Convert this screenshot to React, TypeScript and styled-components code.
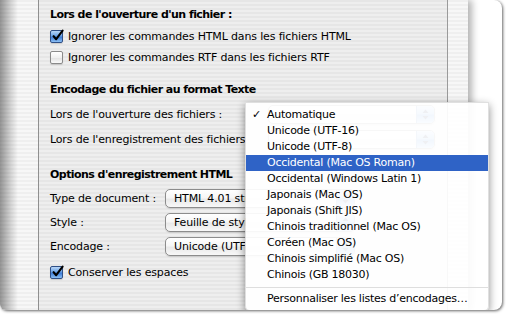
import React from 'react';
import styled, { createGlobalStyle } from 'styled-components';

const GlobalStyle = createGlobalStyle`
	html, body {
		margin: 0;
		padding: 0;
		background: #fff;
	}
	body {
		font-family: "DejaVu Sans", "Liberation Sans", sans-serif;
		color: #000;
	}
`;

const Stage = styled.div`
	width: 509px;
	height: 317px;
	background: #fff;
	overflow: hidden;
`;

const Picture = styled.div`
	position: relative;
	width: 502px;
	height: 310px;
	background: #fff;
	border-radius: 0 8px 8px 6px;
	box-shadow: 1px 1px 3px rgba(0, 0, 0, 0.6);
	overflow: hidden;
	display: flex;
`;

const Window = styled.div`
	position: relative;
	width: 468px;
	height: 100%;
	display: flex;
	background: repeating-linear-gradient(to bottom, #efefef 0, #efefef 2px, #f7f7f7 2px, #f7f7f7 4px);
	box-shadow: 4px 0 7px rgba(0, 0, 0, 0.3);

	&::before {
		content: '';
		position: absolute;
		left: 0;
		top: 0;
		bottom: 0;
		width: 18px;
		background: linear-gradient(to right, rgba(0, 0, 0, 0.4), rgba(0, 0, 0, 0.14) 60%, rgba(0, 0, 0, 0));
	}
`;

const SideFrame = styled.div<{ $width: number }>`
	width: ${(p) => p.$width}px;
	flex: none;
`;

const Panel = styled.div`
	flex: 1;
	border-left: 1px solid #8f8f8f;
	border-right: 1px solid #9a9a9a;
	background: repeating-linear-gradient(to bottom, #e6e6e6 0, #e6e6e6 2px, #eeeeee 2px, #eeeeee 4px);
	padding: 5px 0 0 11px;
	display: flex;
	flex-direction: column;
	font-size: 11px;
	letter-spacing: -0.15px;
`;

const Heading = styled.div<{ $gap?: number }>`
	height: 20px;
	line-height: 20px;
	font-weight: bold;
	letter-spacing: -0.55px;
	margin-top: ${(p) => p.$gap || 0}px;
	white-space: nowrap;
`;

const CheckRow = styled.label<{ $gap?: number; $height?: number }>`
	display: flex;
	align-items: center;
	gap: 5px;
	height: ${(p) => p.$height || 21}px;
	margin-top: ${(p) => p.$gap || 0}px;
	white-space: nowrap;
`;

const Box = styled.span<{ $checked: boolean }>`
	width: 11px;
	height: 11px;
	flex: none;
	position: relative;
	border-radius: 2px;
	border: 1px solid ${(p) => (p.$checked ? '#2f4f86' : '#8a8a8a')};
	background: ${(p) =>
		p.$checked
			? 'linear-gradient(to bottom, #b9d6f7 0%, #6aa2e6 45%, #3b7ad6 55%, #8cc0f4 100%)'
			: 'linear-gradient(to bottom, #ffffff 0%, #f0f0f0 50%, #e2e2e2 55%, #fafafa 100%)'};
	box-shadow: 0 1px 1px rgba(0, 0, 0, 0.15);

	svg {
		position: absolute;
		left: 0px;
		top: -2px;
	}
`;

const FieldGrid = styled.div<{ $label: number; $row: number; $gap?: number }>`
	display: grid;
	grid-template-columns: ${(p) => p.$label}px auto;
	grid-auto-rows: ${(p) => p.$row}px;
	align-items: center;
	margin-top: ${(p) => p.$gap || 0}px;
`;

const Label = styled.div`
	white-space: nowrap;
`;

const Popup = styled.div<{ $width: number }>`
	position: relative;
	width: ${(p) => p.$width}px;
	height: 17px;
	border: 1px solid #8c8c8c;
	border-radius: 5px;
	background: linear-gradient(to bottom, #ffffff 0%, #f6f6f6 45%, #e9e9e9 55%, #f8f8f8 100%);
	box-shadow: 0 1px 1px rgba(0, 0, 0, 0.12);
	display: flex;
	align-items: center;
	padding-left: 8px;
	box-sizing: content-box;
	white-space: nowrap;
	overflow: hidden;
`;

/* the open menu covers the rest of the value, so only the visible part is kept */
const PopupValue = styled.span`
	display: block;
	max-width: 72px;
	overflow: hidden;
`;

const PopupArrows = styled.span`
	position: absolute;
	right: 0;
	top: 0;
	bottom: 0;
	width: 17px;
	border-left: 1px solid #6a8fc4;
	background: linear-gradient(to bottom, #c9e0fa 0%, #7fb0ec 45%, #4d8ddf 55%, #a8d0f8 100%);
	display: flex;
	align-items: center;
	justify-content: center;
`;

const Menu = styled.div`
	position: absolute;
	left: 245px;
	top: 102px;
	width: 244px;
	padding: 4px 0 3px;
	background: rgba(255, 255, 255, 0.93);
	border: 1px solid rgba(0, 0, 0, 0.12);
	border-radius: 0 0 5px 5px;
	box-shadow: 0 3px 9px rgba(0, 0, 0, 0.45);
	font-size: 11px;
	letter-spacing: -0.25px;
	box-sizing: border-box;
`;

const MenuItem = styled.div<{ $active?: boolean }>`
	position: relative;
	height: 16px;
	line-height: 16px;
	padding-left: 21px;
	white-space: nowrap;
	background: ${(p) => (p.$active ? '#2f63c6' : 'transparent')};
	color: ${(p) => (p.$active ? '#fff' : '#000')};
`;

const Tick = styled.span`
	position: absolute;
	left: 6px;
	top: 0;
	font-size: 11px;
`;

const Separator = styled.div`
	height: 8px;
	display: flex;
	align-items: center;

	&::after {
		content: '';
		flex: 1;
		height: 1px;
		background: #dedede;
	}
`;

const CheckMark = () => (
	<svg width="13" height="13" viewBox="0 0 13 13">
		<path d="M2.6 7.2 L5.2 10.2 L11.6 1.6" fill="none" stroke="#000" strokeWidth="2.1" strokeLinecap="round" strokeLinejoin="round" />
	</svg>
);

const Arrows = () => (
	<svg width="7" height="11" viewBox="0 0 7 11">
		<path d="M3.5 0.5 L6.5 4 L0.5 4 Z M3.5 10.5 L6.5 7 L0.5 7 Z" fill="#1b2f55" />
	</svg>
);

type CheckProps = {
	checked: boolean;
	text: string;
	gap?: number;
	height?: number;
};

const Check = ({ checked, text, gap, height }: CheckProps) => (
	<CheckRow $gap={gap} $height={height}>
		<Box $checked={checked}>{checked && <CheckMark />}</Box>
		<span>{text}</span>
	</CheckRow>
);

const SelectBox = ({ value, width }: { value: string; width: number }) => (
	<Popup $width={width}>
		<PopupValue>{value}</PopupValue>
		<PopupArrows>
			<Arrows />
		</PopupArrows>
	</Popup>
);

const encodings = [
	'Automatique',
	'Unicode (UTF-16)',
	'Unicode (UTF-8)',
	'Occidental (Mac OS Roman)',
	'Occidental (Windows Latin 1)',
	'Japonais (Mac OS)',
	'Japonais (Shift JIS)',
	'Chinois traditionnel (Mac OS)',
	'Coréen (Mac OS)',
	'Chinois simplifié (Mac OS)',
	'Chinois (GB 18030)',
];

export default function App() {
	return (
		<Stage>
			<GlobalStyle />
			<Picture>
				<Window>
					<SideFrame $width={38} />
					<Panel>
						<Heading>Lors de l'ouverture d'un fichier :</Heading>
						<Check checked text="Ignorer les commandes HTML dans les fichiers HTML" gap={1} />
						<Check checked={false} text="Ignorer les commandes RTF dans les fichiers RTF" />

						<Heading $gap={12}>Encodage du fichier au format Texte</Heading>
						<FieldGrid $label={218} $row={25} $gap={2}>
							<Label>Lors de l'ouverture des fichiers :</Label>
							<SelectBox value="" width={157} />
							<Label>Lors de l'enregistrement des fichiers</Label>
							<SelectBox value="" width={157} />
						</FieldGrid>

						<Heading $gap={13}>Options d'enregistrement HTML</Heading>
						<FieldGrid $label={115} $row={24} $gap={1}>
							<Label>Type de document :</Label>
							<SelectBox value="HTML 4.01 strict" width={180} />
							<Label>Style :</Label>
							<SelectBox value="Feuille de style incorporée" width={180} />
							<Label>Encodage :</Label>
							<SelectBox value="Unicode (UTF-8)" width={180} />
						</FieldGrid>
						<Check checked text="Conserver les espaces" gap={4} height={20} />
					</Panel>
					<SideFrame $width={20} />
				</Window>

				<Menu>
					{encodings.map((name, i) => (
						<MenuItem key={name} $active={i === 3}>
							{i === 0 && <Tick>✓</Tick>}
							{name}
						</MenuItem>
					))}
					<Separator />
					<MenuItem>Personnaliser les listes d’encodages…</MenuItem>
				</Menu>
			</Picture>
		</Stage>
	);
}
